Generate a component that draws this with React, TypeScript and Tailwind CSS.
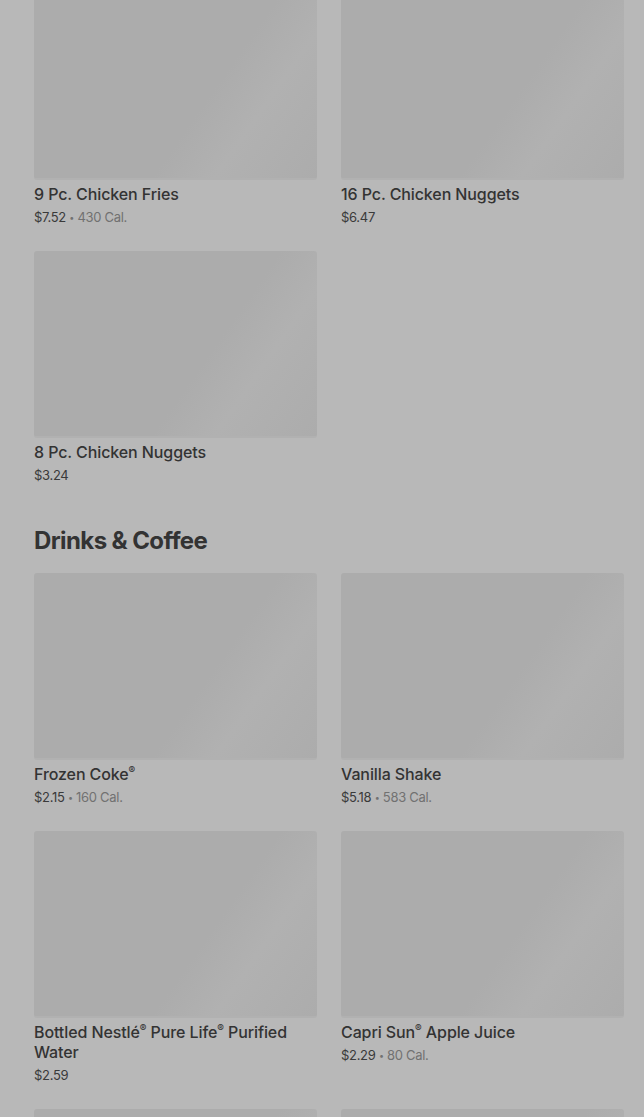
import React from "react";

type Item = { name: string; price: string; cal?: string };

const section1: Item[] = [
  { name: "9 Pc. Chicken Fries", price: "$7.52", cal: "430 Cal." },
  { name: "16 Pc. Chicken Nuggets", price: "$6.47" },
  { name: "8 Pc. Chicken Nuggets", price: "$3.24" },
];

const section2: Item[] = [
  { name: "Frozen Coke®", price: "$2.15", cal: "160 Cal." },
  { name: "Vanilla Shake", price: "$5.18", cal: "583 Cal." },
  { name: "Bottled Nestlé® Pure Life® Purified Water", price: "$2.59" },
  { name: "Capri Sun® Apple Juice", price: "$2.29", cal: "80 Cal." },
  { name: "", price: "" },
  { name: "", price: "" },
];

function Name({ text }: { text: string }) {
  const parts = text.split("®");
  return (
    <>
      {parts.map((p, i) => (
        <React.Fragment key={i}>
          {p}
          {i < parts.length - 1 && (
            <span className="align-super text-[10px] leading-[0]">®</span>
          )}
        </React.Fragment>
      ))}
    </>
  );
}

function Card({ item }: { item: Item }) {
  return (
    <div className="flex flex-col">
      <div className="h-[187px] w-full rounded-[3px] bg-[linear-gradient(125deg,#acacac_0%,#acacac_60%,#b1b1b1_75%,#acacac_100%)] border-b-[2px] border-[#b1b1b1]" />
      {item.name && (
        <>
          <div className="mt-[4px] text-[16px] leading-[20px] font-medium text-[#333333] tracking-[-0.1px]">
            <Name text={item.name} />
          </div>
          <div className="mt-[3px] h-[20px] text-[13px] leading-[20px] text-[#3a3a3a] tracking-[-0.3px]">
            {item.price}
            {item.cal && (
              <span className="text-[#717171]">
                {" "}
                <span className="relative -top-[1px] text-[9px] leading-[0]">•</span> {item.cal}
              </span>
            )}
          </div>
        </>
      )}
    </div>
  );
}

export default function App() {
  return (
    <div
      className="w-[644px] h-[1117px] overflow-hidden bg-[#b8b8b8] pl-[34px] pr-[20px]"
      style={{ fontFamily: "Inter, 'Noto Sans', sans-serif" }}
    >
      <div className="-mt-[7px] grid grid-cols-2 gap-x-[24px] gap-y-[24px]">
        {section1.map((it, i) => (
          <Card key={i} item={it} />
        ))}
      </div>
      <h2 className="mt-[40px] mb-[16px] text-[24px] leading-[32px] font-bold text-[#333333] tracking-[-0.6px]">
        Drinks &amp; Coffee
      </h2>
      <div className="grid grid-cols-2 gap-x-[24px] gap-y-[24px]">
        {section2.map((it, i) => (
          <Card key={i} item={it} />
        ))}
      </div>
    </div>
  );
}
